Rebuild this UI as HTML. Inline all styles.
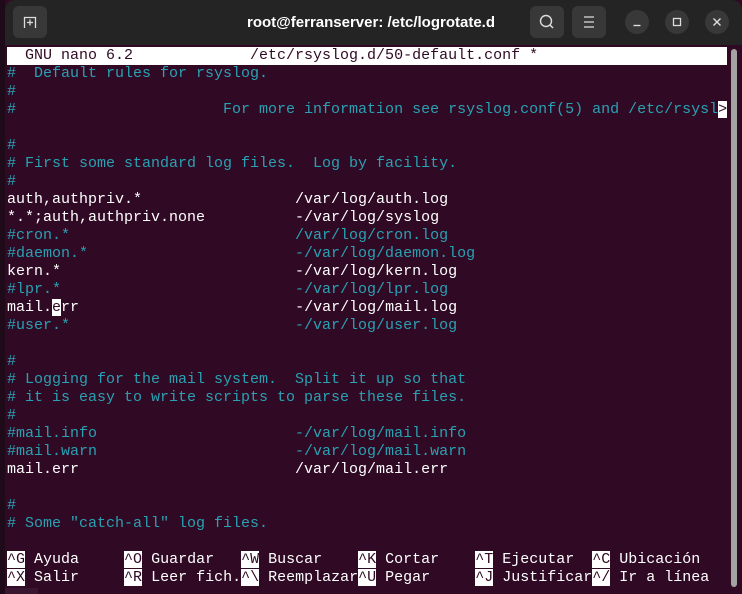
<!DOCTYPE html>
<html><head><meta charset="utf-8">
<style>
*{margin:0;padding:0;box-sizing:border-box}
html,body{width:742px;height:594px;overflow:hidden;background:#1e0a18}
.win{position:absolute;left:5px;top:0;width:737px;height:594px;background:#300a24}
.tb{position:absolute;left:5px;top:0;width:737px;height:45px;background:#242424;border-radius:10px 10px 0 0}
.btn{position:absolute;top:6px;width:34px;height:32px;background:#383838;border-radius:6px}
.circ{position:absolute;top:10px;width:24px;height:24px;border-radius:50%;background:#383838}
.title{position:absolute;top:14px;left:0;width:742px;text-align:center;color:#fff;font:bold 15px "Liberation Sans",sans-serif}
.term{position:absolute;left:7px;top:47px;font:15px/18px "Liberation Mono",monospace;color:#fff}
.term div{height:18px;white-space:pre}
.c{color:#2aa1b3}
.inv{background:#fff;color:#300a24}
.sb{position:absolute;left:731px;top:49px;width:6px;height:538px;background:#a3a3a3;border-radius:3px}
</style></head><body>
<div class="win"></div>
<div class="tb"></div>
<div class="btn" style="left:13px"></div>
<svg style="position:absolute;left:13px;top:6px" width="34" height="32"><path d="M11.5 22 V11.5 H22.5 V22 M14 16.5 h6 M17 13.5 v6" stroke="#ddd" stroke-width="1.3" fill="none"/></svg>
<div class="title">root@ferranserver: /etc/logrotate.d</div>
<div class="btn" style="left:530px"></div>
<svg style="position:absolute;left:530px;top:6px" width="34" height="32"><circle cx="16" cy="15" r="5.5" stroke="#ddd" stroke-width="1.4" fill="none"/><path d="M20 19 L23 22" stroke="#ddd" stroke-width="1.5"/></svg>
<div class="btn" style="left:572px"></div>
<svg style="position:absolute;left:572px;top:6px" width="34" height="32"><path d="M12 11h10M12 16h10M12 21h10" stroke="#ddd" stroke-width="1.3"/></svg>
<div class="circ" style="left:625px"></div>
<svg style="position:absolute;left:625px;top:10px" width="24" height="24"><path d="M8.5 15.5h7" stroke="#ddd" stroke-width="1.4"/></svg>
<div class="circ" style="left:665px"></div>
<svg style="position:absolute;left:665px;top:10px" width="24" height="24"><rect x="8.5" y="8.5" width="7" height="7" stroke="#ddd" stroke-width="1.3" fill="none"/></svg>
<div class="circ" style="left:705px"></div>
<svg style="position:absolute;left:705px;top:10px" width="24" height="24"><path d="M8.5 8.5l7 7M15.5 8.5l-7 7" stroke="#ddd" stroke-width="1.4"/></svg>
<div class="sb"></div>
<div class="term"><div class="inv" style="width:720px">  GNU nano 6.2             /etc/rsyslog.d/50-default.conf *</div><div class="c">#  Default rules for rsyslog.</div><div class="c">#</div><div class="c">#                       For more information see rsyslog.conf(5) and /etc/rsysl<span class="inv">&gt;</span></div><div></div><div class="c">#</div><div class="c"># First some standard log files.  Log by facility.</div><div class="c">#</div><div>auth,authpriv.*                 /var/log/auth.log</div><div>*.*;auth,authpriv.none          -/var/log/syslog</div><div class="c">#cron.*                         /var/log/cron.log</div><div class="c">#daemon.*                       -/var/log/daemon.log</div><div>kern.*                          -/var/log/kern.log</div><div class="c">#lpr.*                          -/var/log/lpr.log</div><div>mail.<span class="inv">e</span>rr                        -/var/log/mail.log</div><div class="c">#user.*                         -/var/log/user.log</div><div></div><div class="c">#</div><div class="c"># Logging for the mail system.  Split it up so that</div><div class="c"># it is easy to write scripts to parse these files.</div><div class="c">#</div><div class="c">#mail.info                      -/var/log/mail.info</div><div class="c">#mail.warn                      -/var/log/mail.warn</div><div>mail.err                        /var/log/mail.err</div><div></div><div class="c">#</div><div class="c"># Some "catch-all" log files.</div><div></div><div><span class="inv">^G</span> Ayuda     <span class="inv">^O</span> Guardar   <span class="inv">^W</span> Buscar    <span class="inv">^K</span> Cortar    <span class="inv">^T</span> Ejecutar  <span class="inv">^C</span> Ubicación</div><div><span class="inv">^X</span> Salir     <span class="inv">^R</span> Leer fich.<span class="inv">^\</span> Reemplazar<span class="inv">^U</span> Pegar     <span class="inv">^J</span> Justificar<span class="inv">^/</span> Ir a línea</div></div>
<div style="position:absolute;left:5px;top:588px;width:33px;height:6px;background:#3a1530"></div>
</body></html>
